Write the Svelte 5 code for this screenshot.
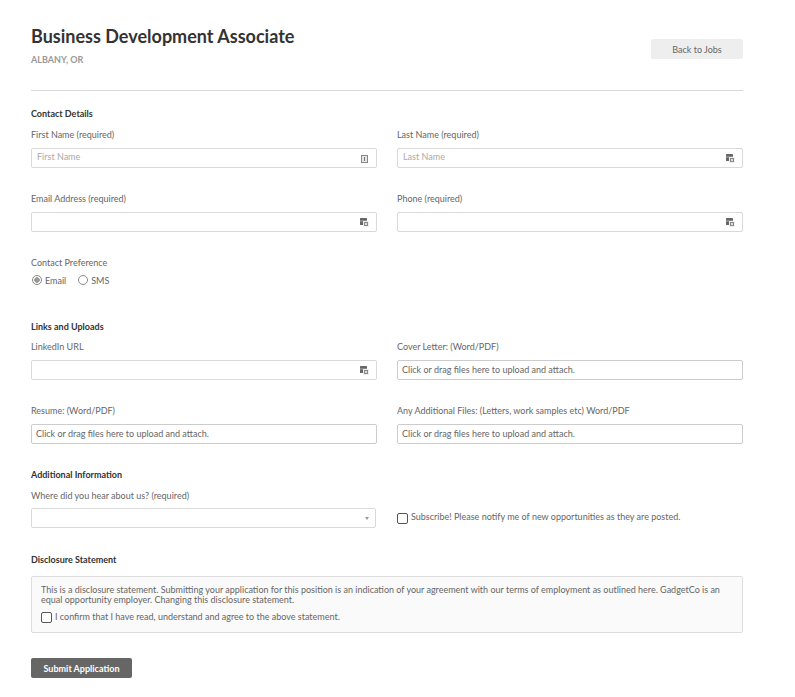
<script>
  const contact = [
    { label: "First Name (required)", placeholder: "First Name", icon: "card" },
    { label: "Last Name (required)", placeholder: "Last Name", icon: "key" },
    { label: "Email Address (required)", placeholder: "", icon: "key" },
    { label: "Phone (required)", placeholder: "", icon: "key" },
  ];
  const uploads = [
    { label: "LinkedIn URL", icon: "key" },
    { label: "Cover Letter: (Word/PDF)", file: true },
    { label: "Resume: (Word/PDF)", file: true },
    { label: "Any Additional Files: (Letters, work samples etc) Word/PDF", file: true },
  ];
</script>

{#snippet field(item)}
  <div class="field">
    <span class="label">{item.label}</span>
    {#if item.file}
      <div class="drop">Click or drag files here to upload and attach.</div>
    {:else}
      <div class="input">
        <span class="placeholder">{item.placeholder}</span>
        {#if item.icon === "card"}
          <svg class="card" width="7" height="8" viewBox="0 0 7 8">
            <rect x="0.5" y="0.5" width="6" height="7" fill="#e6e6e6" stroke="#888" />
            <rect x="3" y="2" width="1" height="4" fill="#777" />
          </svg>
        {:else}
          <svg width="9" height="9" viewBox="0 0 9 9">
            <rect x="0" y="0" width="7" height="7" rx="0.5" fill="#666" />
            <rect x="0" y="2.5" width="7" height="1" fill="#aaa" />
            <rect x="3.5" y="3.5" width="5" height="5" fill="#888" stroke="#eee" />
            <rect x="5" y="5" width="2" height="2" fill="#ddd" />
          </svg>
        {/if}
      </div>
    {/if}
  </div>
{/snippet}

<main>
  <header>
    <div>
      <h1>Business Development Associate</h1>
      <p class="location">ALBANY, OR</p>
    </div>
    <button class="back">Back to Jobs</button>
  </header>

  <section class="contact">
    <h2>Contact Details</h2>
    <div class="grid">
      {#each contact as item}
        {@render field(item)}
      {/each}
    </div>
    <div class="preference">
      <span class="label">Contact Preference</span>
      <div class="radios">
        <span class="radio checked"></span><span class="opt">Email</span>
        <span class="radio second"></span><span class="opt">SMS</span>
      </div>
    </div>
  </section>

  <section class="links">
    <h2>Links and Uploads</h2>
    <div class="grid">
      {#each uploads as item}
        {@render field(item)}
      {/each}
    </div>
  </section>

  <section class="additional">
    <h2>Additional Information</h2>
    <div class="grid">
      <div class="field where">
        <span class="label">Where did you hear about us? (required)</span>
        <div class="select"><span class="caret"></span></div>
      </div>
      <div class="subscribe">
        <span class="check"></span>
        <span class="opt">Subscribe! Please notify me of new opportunities as they are posted.</span>
      </div>
    </div>
  </section>

  <section class="disclosure">
    <h2>Disclosure Statement</h2>
    <div class="box">
      <p>This is a disclosure statement. Submitting your application for this position is an indication of your agreement with our terms of employment as outlined here. GadgetCo is an equal opportunity employer. Changing this disclosure statement.</p>
      <div class="confirm">
        <span class="check"></span>
        <span class="opt">I confirm that I have read, understand and agree to the above statement.</span>
      </div>
    </div>
  </section>

  <button class="submit">Submit Application</button>
</main>

<style>
  :global(body) {
    background: #fff;
  }

  main {
    box-sizing: border-box;
    margin-left: 31px;
    width: 712px;
    padding-top: 26px;
    font-family: Lato, "Open Sans", sans-serif;
    font-size: 9px;
    color: #666;
  }

  header {
    display: flex;
    justify-content: space-between;
    align-items: flex-start;
    height: 64px;
    border-bottom: 1px solid #d9d9d9;
  }

  h1 {
    margin: 0;
    font-size: 18px;
    line-height: 20px;
    font-weight: 700;
    color: #333;
  }

  .location {
    margin: 8px 0 0;
    font-size: 9px;
    line-height: 11px;
    font-weight: 700;
    color: #999;
  }

  .back {
    width: 92px;
    height: 20px;
    margin-top: 13px;
    padding: 0;
    border: none;
    border-radius: 2px;
    background: #eee;
    color: #666;
    font: inherit;
  }

  h2 {
    margin: 0;
    font-size: 9px;
    line-height: 12px;
    font-weight: 700;
    color: #333;
  }

  .contact {
    padding-top: 17px;
  }

  .grid {
    display: grid;
    grid-template-columns: 346px 346px;
    column-gap: 20px;
    row-gap: 24px;
    margin-top: 8px;
  }

  .links .grid {
    margin-top: 7px;
  }

  .field {
    display: flex;
    flex-direction: column;
  }

  .label {
    display: block;
    line-height: 12px;
    padding-top: 1px;
    margin-bottom: 7px;
  }

  .where .label {
    margin-bottom: 6px;
  }

  .input,
  .drop,
  .select {
    box-sizing: border-box;
    height: 20px;
    display: flex;
    align-items: center;
    justify-content: space-between;
    border: 1px solid #d9d9d9;
    border-radius: 2px;
    background: #fff;
  }

  .input {
    padding: 0 7px 0 5px;
  }

  .input svg {
    margin-top: 1px;
  }

  .input svg.card {
    margin-right: 1px;
  }

  .placeholder {
    color: #aaa;
    margin-top: -3px;
  }

  .drop {
    border-color: #ccc;
    padding-left: 4px;
    padding-bottom: 2px;
    justify-content: flex-start;
  }

  .preference {
    margin-top: 24px;
  }

  .preference .label {
    margin-bottom: 5px;
  }

  .radios {
    display: flex;
    align-items: center;
    height: 12px;
  }

  .radio {
    box-sizing: border-box;
    width: 10px;
    height: 10px;
    margin-right: 3px;
    margin-left: 1px;
    border: 1px solid #888;
    border-radius: 50%;
    background: #fff;
  }

  .radio.checked {
    background: radial-gradient(circle, #999 0 2.5px, #fff 3px);
  }

  .radio.second {
    margin-left: 12px;
  }

  .links {
    padding-top: 35px;
  }

  .additional {
    padding-top: 25px;
  }

  .select {
    width: 345px;
    justify-content: flex-end;
    padding-right: 6px;
  }

  .caret {
    border-left: 2.5px solid transparent;
    border-right: 2.5px solid transparent;
    border-top: 3px solid #999;
  }

  .subscribe {
    display: flex;
    align-items: center;
    gap: 3px;
    align-self: end;
    height: 20px;
  }

  .check {
    flex: none;
    box-sizing: border-box;
    width: 11px;
    height: 11px;
    border: 1px solid #555;
    border-radius: 2px;
    background: #fff;
  }

  .subscribe .opt,
  .confirm .opt {
    margin-top: -3px;
  }

  .disclosure {
    padding-top: 26px;
  }

  .box {
    box-sizing: border-box;
    height: 57px;
    margin-top: 10px;
    padding: 8px 9px;
    border: 1px solid #ddd;
    border-radius: 2px;
    background: #fafafa;
  }

  .box p {
    margin: 0;
    line-height: 10px;
  }

  .confirm {
    display: flex;
    align-items: center;
    gap: 3px;
    margin-top: 7px;
  }

  .submit {
    display: block;
    width: 101px;
    height: 20px;
    margin-top: 25px;
    padding: 0;
    border: none;
    border-radius: 2px;
    background: #666;
    color: #fff;
    font: inherit;
    font-weight: 700;
  }
</style>
